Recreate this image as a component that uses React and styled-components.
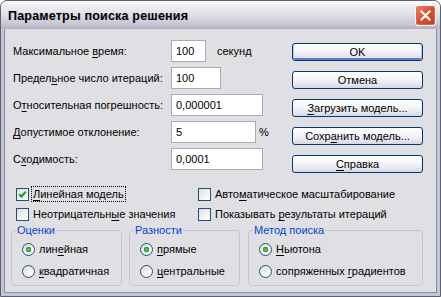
import React from 'react';
import styled, { createGlobalStyle, css } from 'styled-components';

const GlobalStyle = createGlobalStyle`
  html, body {
    margin: 0;
    padding: 0;
    background: #ffffff;
  }
  body {
    font-family: "Liberation Sans", Arial, sans-serif;
    font-size: 11px;
    color: #000000;
  }
`;

const fields = [
  { label: ['Максимальное ', 'в', 'ремя:'], value: '100', width: 35, unit: 'секунд' },
  { label: ['Предел', 'ь', 'ное число итераций:'], value: '100', width: 50 },
  { label: ['О', 'т', 'носительная погрешность:'], value: '0,000001', width: 92 },
  { label: ['', 'Д', 'опустимое отклонение:'], value: '5', width: 85, unit: '%' },
  { label: ['С', 'х', 'одимость:'], value: '0,0001', width: 92 },
];

const buttons = [
  { text: ['', '', 'OK'], primary: true },
  { text: ['', '', 'Отмена'] },
  { text: ['', 'З', 'агрузить модель...'] },
  { text: ['Сохр', 'а', 'нить модель...'] },
  { text: ['', 'С', 'правка'] },
];

const checks = [
  { text: ['', 'Л', 'инейная модель'], checked: true, focused: true },
  { text: ['Авто', 'м', 'атическое масштабирование'] },
  { text: ['Неотрицательн', 'ы', 'е значения'] },
  { text: ['Показывать ', 'р', 'езультаты итераций'] },
];

const groups = [
  {
    title: 'Оценки',
    width: 111,
    options: [['лин', 'е', 'йная'], ['', 'к', 'вадратичная']],
  },
  {
    title: 'Разности',
    width: 111,
    options: [['', 'п', 'рямые'], ['', 'ц', 'ентральные']],
  },
  {
    title: 'Метод поиска',
    width: 175,
    options: [['', 'Н', 'ьютона'], ['сопряженных ', 'г', 'радиентов']],
  },
];

function Label({ parts }) {
  return (
    <>
      {parts[0]}
      {parts[1] && <Accel>{parts[1]}</Accel>}
      {parts[2]}
    </>
  );
}

function CheckMark() {
  return (
    <svg width="11" height="11" viewBox="0 0 11 11">
      <path d="M2.2 5.2 L4.4 7.6 L8.8 2.8" fill="none" stroke="#21a121" strokeWidth="2.2" />
    </svg>
  );
}

function CloseIcon() {
  return (
    <svg width="11" height="11" viewBox="0 0 11 11">
      <path d="M1.5 1.5 L9.5 9.5 M9.5 1.5 L1.5 9.5" stroke="#ffffff" strokeWidth="2.2" strokeLinecap="square" />
    </svg>
  );
}

export default function App() {
  return (
    <>
      <GlobalStyle />
      <Window>
        <TitleBar>
          <Title>Параметры поиска решения</Title>
          <CloseButton>
            <CloseIcon />
          </CloseButton>
        </TitleBar>
        <Body>
          <TopSection>
            <FormGrid>
              {fields.map((f, i) => (
                <React.Fragment key={i}>
                  <FieldLabel>
                    <Label parts={f.label} />
                  </FieldLabel>
                  <FieldCell>
                    <Input $width={f.width}>{f.value}</Input>
                    {f.unit && <Unit $wide={f.unit.length > 1}>{f.unit}</Unit>}
                  </FieldCell>
                </React.Fragment>
              ))}
            </FormGrid>
            <ButtonColumn>
              {buttons.map((b, i) => (
                <Button key={i} $primary={b.primary}>
                  <Label parts={b.text} />
                </Button>
              ))}
            </ButtonColumn>
          </TopSection>

          <CheckGrid>
            {checks.map((c, i) => (
              <CheckRow key={i}>
                <CheckBox>{c.checked && <CheckMark />}</CheckBox>
                <CheckText $focused={c.focused}>
                  <Label parts={c.text} />
                </CheckText>
              </CheckRow>
            ))}
          </CheckGrid>

          <GroupRow>
            {groups.map((g, i) => (
              <Group key={i} $width={g.width}>
                <Legend>{g.title}</Legend>
                {g.options.map((o, j) => (
                  <RadioRow key={j}>
                    <Radio $checked={j === 0} />
                    <span>
                      <Label parts={o} />
                    </span>
                  </RadioRow>
                ))}
              </Group>
            ))}
          </GroupRow>
        </Body>
      </Window>
    </>
  );
}

const Window = styled.div`
  width: 441px;
  height: 297px;
  box-sizing: border-box;
  border: 1px solid #5e5f75;
  border-radius: 7px 7px 0 0;
  background: #c4c4d2;
  padding: 0 3px 3px;
  display: flex;
  flex-direction: column;
  overflow: hidden;
`;

const TitleBar = styled.div`
  height: 28px;
  margin: 0 -3px;
  padding: 0 4px 0 7px;
  display: flex;
  align-items: center;
  justify-content: space-between;
  border-radius: 6px 6px 0 0;
  background: linear-gradient(
    to bottom,
    #fdfdfe 0%,
    #ededf2 20%,
    #dcdce5 55%,
    #c9c9d6 80%,
    #b0b0c2 100%
  );
  box-shadow: inset 0 1px 0 #ffffff;
`;

const Title = styled.div`
  font-family: "Liberation Sans", Arial, sans-serif;
  font-weight: bold;
  font-size: 12.5px;
  letter-spacing: 0.2px;
  color: #000000;
  text-shadow: 1px 1px 0 #c8c8d4;
  padding-top: 1px;
`;

const CloseButton = styled.div`
  width: 21px;
  height: 21px;
  box-sizing: border-box;
  border: 1px solid #ffffff;
  border-radius: 3px;
  background: linear-gradient(135deg, #f08a6a 0%, #e0502f 45%, #c43a1f 100%);
  box-shadow: inset 0 0 0 1px #d66a50;
  display: flex;
  align-items: center;
  justify-content: center;
  margin-top: 1px;
`;

const Body = styled.div`
  flex: 1;
  background: #e0dfe3;
  border: 1px solid #8d8ea6;
  border-top: none;
  display: flex;
  flex-direction: column;
`;

const TopSection = styled.div`
  display: flex;
  justify-content: space-between;
  padding: 11px 13px 0 8px;
`;

const FormGrid = styled.div`
  display: grid;
  grid-template-columns: 158px auto;
  grid-auto-rows: 22px;
  row-gap: 5px;
  align-items: center;
`;

const FieldLabel = styled.div`
  white-space: nowrap;
`;

const FieldCell = styled.div`
  display: flex;
  align-items: center;
  height: 22px;
`;

const Input = styled.div`
  width: ${(p) => p.$width}px;
  height: 22px;
  box-sizing: border-box;
  border: 1px solid #a5acb5;
  background: #ffffff;
  padding-left: 4px;
  display: flex;
  align-items: center;
`;

const Unit = styled.span`
  margin-left: ${(p) => (p.$wide ? 11 : 3)}px;
`;

const ButtonColumn = styled.div`
  display: flex;
  flex-direction: column;
  gap: 10px;
  padding-top: 3px;
`;

const Button = styled.div`
  width: 131px;
  height: 18px;
  box-sizing: border-box;
  border: 1px solid #003c74;
  border-radius: 3px;
  background: linear-gradient(to bottom, #ffffff 0%, #f6f6f9 45%, #e4e4ec 80%, #d6d6e0 100%);
  display: flex;
  align-items: center;
  justify-content: center;
  white-space: nowrap;
  ${(p) =>
    p.$primary &&
    css`
      box-shadow: inset 1px 0 0 #b8c8ee, inset -1px 0 0 #b8c8ee, inset 0 -2px 0 #5a7edc;
    `}
`;

const CheckGrid = styled.div`
  display: grid;
  grid-template-columns: 182px auto;
  grid-auto-rows: 20px;
  padding: 11px 0 0 11px;
`;

const CheckRow = styled.div`
  display: flex;
  align-items: center;
  gap: 2px;
  white-space: nowrap;
`;

const CheckBox = styled.span`
  width: 13px;
  height: 13px;
  box-sizing: border-box;
  border: 1px solid #1c5180;
  background: linear-gradient(135deg, #dcdcd7 0%, #f4f4f0 60%, #ffffff 100%);
  display: flex;
  align-items: center;
  justify-content: center;
  flex-shrink: 0;
`;

const CheckText = styled.span`
  padding: 0 1px;
  line-height: 14px;
  outline: ${(p) => (p.$focused ? '1px dotted #000000' : 'none')};
  outline-offset: 0;
  margin-left: 1px;
`;

const GroupRow = styled.div`
  display: flex;
  gap: 7px;
  padding-left: 6px;
  & > :nth-child(3) {
    margin-left: 1px;
  }
`;

const Group = styled.fieldset`
  width: ${(p) => p.$width}px;
  box-sizing: border-box;
  margin: 0;
  padding: 1px 0 3px 10px;
  min-width: 0;
  border: 1px solid #c5c5cf;
  border-radius: 4px;
`;

const Legend = styled.legend`
  padding: 0 1px;
  margin-left: -6px;
  color: #0046d5;
  line-height: 13px;
  white-space: nowrap;
`;

const RadioRow = styled.div`
  height: 22px;
  display: flex;
  align-items: center;
  gap: 4px;
  white-space: nowrap;
`;

const Radio = styled.span`
  width: 13px;
  height: 13px;
  box-sizing: border-box;
  border-radius: 50%;
  border: 1px solid #1c5180;
  flex-shrink: 0;
  background: ${(p) =>
    p.$checked
      ? 'radial-gradient(circle at 50% 50%, #5fd45f 0, #21a121 2.5px, transparent 3px), linear-gradient(135deg, #dcdcd7 0%, #f4f4f0 60%, #ffffff 100%)'
      : 'linear-gradient(135deg, #dcdcd7 0%, #f4f4f0 60%, #ffffff 100%)'};
`;

const Accel = styled.u`
  text-decoration: underline;
  text-underline-offset: 2px;
`;
